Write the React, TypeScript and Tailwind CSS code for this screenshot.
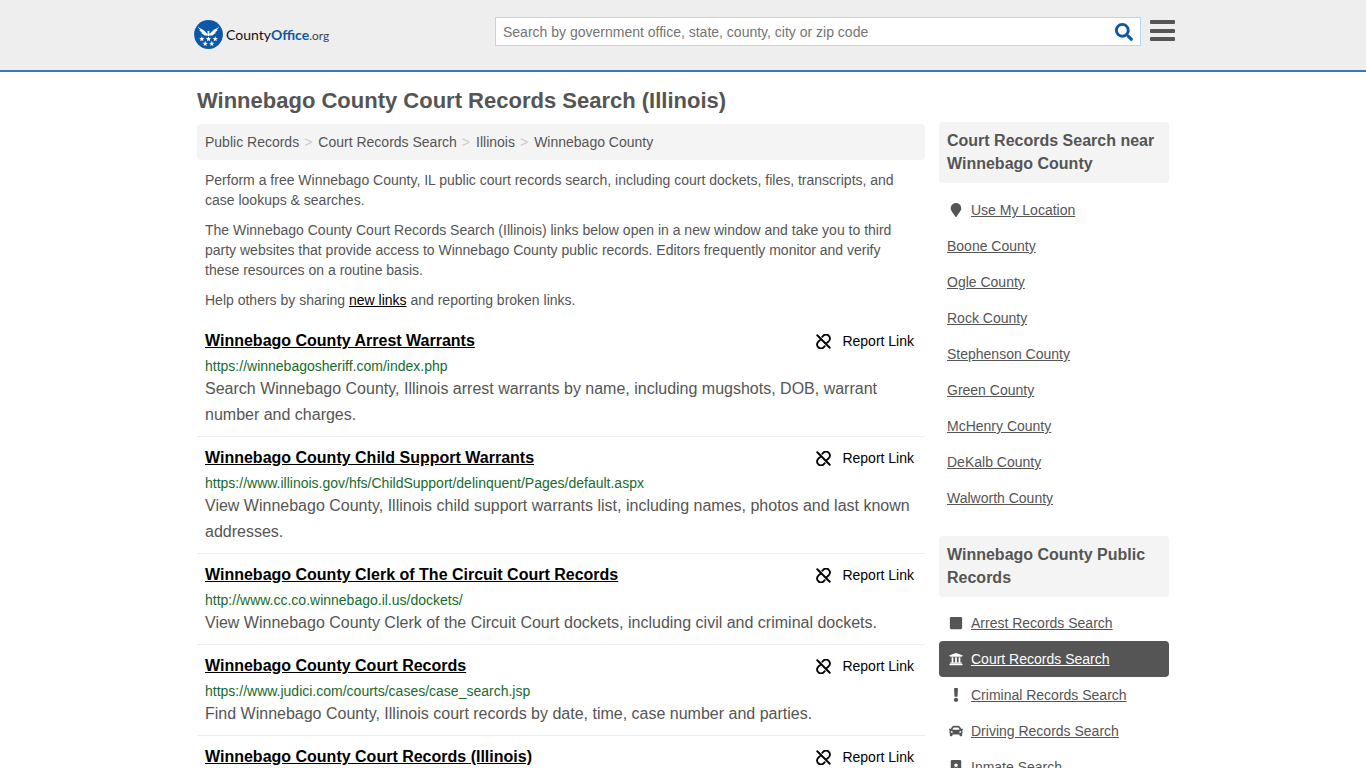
import React from 'react';
import {
  FaCar,
  FaExclamation,
  FaMapMarker,
  FaPortrait,
  FaSearch,
  FaSquare,
  FaUniversity,
} from 'react-icons/fa';

const breadcrumbs = ['Public Records', 'Court Records Search', 'Illinois', 'Winnebago County'];

const resources = [
  {
    title: 'Winnebago County Arrest Warrants',
    url: 'https://winnebagosheriff.com/index.php',
    description:
      'Search Winnebago County, Illinois arrest warrants by name, including mugshots, DOB, warrant number and charges.',
  },
  {
    title: 'Winnebago County Child Support Warrants',
    url: 'https://www.illinois.gov/hfs/ChildSupport/delinquent/Pages/default.aspx',
    description:
      'View Winnebago County, Illinois child support warrants list, including names, photos and last known addresses.',
  },
  {
    title: 'Winnebago County Clerk of The Circuit Court Records',
    url: 'http://www.cc.co.winnebago.il.us/dockets/',
    description:
      'View Winnebago County Clerk of the Circuit Court dockets, including civil and criminal dockets.',
  },
  {
    title: 'Winnebago County Court Records',
    url: 'https://www.judici.com/courts/cases/case_search.jsp',
    description:
      'Find Winnebago County, Illinois court records by date, time, case number and parties.',
  },
  {
    title: 'Winnebago County Court Records (Illinois)',
  },
];

const nearby = [
  'Boone County',
  'Ogle County',
  'Rock County',
  'Stephenson County',
  'Green County',
  'McHenry County',
  'DeKalb County',
  'Walworth County',
];

const publicRecords = [
  { label: 'Arrest Records Search', icon: FaSquare },
  { label: 'Court Records Search', icon: FaUniversity, active: true },
  { label: 'Criminal Records Search', icon: FaExclamation },
  { label: 'Driving Records Search', icon: FaCar },
  { label: 'Inmate Search', icon: FaPortrait },
];

const star = 'M0-2.7L.7-.9 2.6-.8 1.1.4 1.6 2.2 0 1.2-1.6 2.2-1.1.4-2.6-.8-.7-.9z';

const wing =
  'M4 6.300c1.300 2.200 4.300 2.700 6.300 4.500 1.100 1 1.500 2.300 3.200 2.900v1.700c-2 .5-3.600.1-4.400-.9.500 0 .9-.1 1.200-.3-1.500-.1-2.700-.7-3.300-1.800.500.100 1 .100 1.400-.1-1.700-.6-2.800-1.400-3.100-2.500.400.100.800.100 1.100 0C5.100 8.800 4.200 7.600 4 6.300z';

const Logo = () => (
  <a href="#" className="flex items-center gap-[3px]" aria-label="CountyOffice.org">
    <svg viewBox="0 0 29 29" className="size-[29px]" aria-hidden="true">
      <circle cx="14.5" cy="14.5" r="14.4" fill="#0d57a7" />
      <g fill="#fff">
        {/* eagle: one wing, its mirror, then head and tail */}
        <path d={wing} />
        <path d={wing} transform="translate(29 0) scale(-1 1)" />
        <path d="M13.300 11.500c.4-.8 1.800-.9 2.400-.1l-.4.800.3 2.200-.2 1.600h-1.800l-.2-1.600.3-2z" />
        <path d={star} transform="translate(7.800 19)" />
        <path d={star} transform="translate(14.500 19)" />
        <path d={star} transform="translate(21.200 19)" />
        <path d={star} transform="translate(11.200 23.700)" />
        <path d={star} transform="translate(17.800 23.700)" />
      </g>
    </svg>
    <span className="font-[Lato,sans-serif] text-sm leading-5 text-[#111]">
      County<b className="text-[#0d57a7]">Office</b>
      <span className="text-xs text-[#444]">.org</span>
    </span>
  </a>
);

const BrokenLinkIcon = () => (
  <svg
    viewBox="0 0 24 24"
    className="size-[15px] fill-none stroke-current stroke-3"
    strokeLinecap="round"
    aria-hidden="true"
  >
    <path d="M2 2l20 20" />
    <path d="M10 4.500l1.500-1.500a5.800 5.800 0 0 1 9 0a5.800 5.800 0 0 1 0 8.500L16.500 15" />
    <path d="M14 19.500l-1.500 1.500a5.800 5.800 0 0 1-9 0a5.800 5.800 0 0 1 0-8.500L7.500 9" />
  </svg>
);

const SideHeading = ({ children }: { children: React.ReactNode }) => (
  <h2 className="rounded bg-[#f4f4f4] px-2 pt-[7px] pb-2 text-base leading-[23px] font-bold">
    {children}
  </h2>
);

const App = () => {
  return (
    <div className="min-h-screen bg-white font-[Liberation_Sans,Arial,sans-serif] text-sm text-[#555]">
      <header className="border-b-2 border-[#337ab7] bg-[#eee]">
        <div className="mx-auto flex h-[70px] max-w-[984px] items-start pl-[3px]">
          <div className="w-[301px] shrink-0 pt-5">
            <Logo />
          </div>
          <form className="mt-[17px] flex h-[29px] flex-1 items-center border border-[#bcd6ea] bg-white px-[7px]">
            <input
              type="search"
              aria-label="Search"
              placeholder="Search by government office, state, county, city or zip code"
              className="h-full min-w-0 flex-1 text-sm outline-none placeholder:text-[#757575]"
            />
            <button type="button" aria-label="Submit search" className="text-[#0d57a7]">
              <FaSearch className="size-[18px]" />
            </button>
          </form>
          <button type="button" aria-label="Menu" className="mt-5 ml-[9px]">
            <svg viewBox="0 0 25 22" className="h-[22px] w-[25px] fill-[#555]">
              <rect width="25" height="4" rx="1" />
              <rect y="9" width="25" height="4" rx="1" />
              <rect y="17" width="25" height="4" rx="1" />
            </svg>
          </button>
        </div>
      </header>

      <div className="mx-auto flex max-w-[972px] gap-[14px]">
        <main className="min-w-0 flex-1">
          <h1 className="pt-[17px] pb-[11px] text-[22px] leading-6 font-bold">
            Winnebago County Court Records Search (Illinois)
          </h1>
          <nav aria-label="Breadcrumb" className="rounded bg-[#f4f4f4] p-2 leading-5">
            <ol className="flex">
              {breadcrumbs.map((crumb, i) => (
                <li key={crumb}>
                  {i > 0 && <span className="pr-[6px] pl-[5px] text-[#ccc]">&gt;</span>}
                  <a href="#">{crumb}</a>
                </li>
              ))}
            </ol>
          </nav>

          <div className="space-y-[10px] px-2 py-[10px] leading-5">
            <p>
              Perform a free Winnebago County, IL public court records search, including court
              dockets, files, transcripts, and case lookups &amp; searches.
            </p>
            <p>
              The Winnebago County Court Records Search (Illinois) links below open in a new window
              and take you to third party websites that provide access to Winnebago County public
              records. Editors frequently monitor and verify these resources on a routine basis.
            </p>
            <p>
              Help others by sharing{' '}
              <a href="#" className="text-black underline">
                new links
              </a>{' '}
              and reporting broken links.
            </p>
          </div>

          <ul>
            {resources.map(({ title, url, description }) => (
              <li key={title} className="border-b border-[#eee] px-2 pt-[9px] pb-2">
                <div className="flex items-center justify-between text-black">
                  <a href="#" className="text-base leading-6 font-bold underline">
                    {title}
                  </a>
                  <button type="button" className="flex items-center gap-[11px] pr-[3px]">
                    <BrokenLinkIcon />
                    Report Link
                  </button>
                </div>
                {url && <div className="pt-[3px] leading-5 text-[#176b2c]">{url}</div>}
                {description && <p className="text-base leading-[26px]">{description}</p>}
              </li>
            ))}
          </ul>
        </main>

        <aside className="w-[230px] shrink-0 pt-[50px]">
          <SideHeading>Court Records Search near Winnebago County</SideHeading>
          <ul className="pt-[9px] pb-5">
            <li className="flex items-center gap-[6px] p-2 leading-5">
              <FaMapMarker className="w-[18px]" />
              <a href="#" className="underline">
                Use My Location
              </a>
            </li>
            {nearby.map((county) => (
              <li key={county} className="p-2 leading-5">
                <a href="#" className="underline">
                  {county}
                </a>
              </li>
            ))}
          </ul>

          <SideHeading>Winnebago County Public Records</SideHeading>
          <ul className="pt-2">
            {publicRecords.map(({ label, icon: Icon, active }) => (
              <li
                key={label}
                className={`flex items-center gap-[6px] rounded p-2 leading-5 ${
                  active ? 'bg-[#555] text-white' : ''
                }`}
              >
                <Icon className="w-[18px]" />
                <a href="#" className="underline">
                  {label}
                </a>
              </li>
            ))}
          </ul>
        </aside>
      </div>
    </div>
  );
};

export default App;
